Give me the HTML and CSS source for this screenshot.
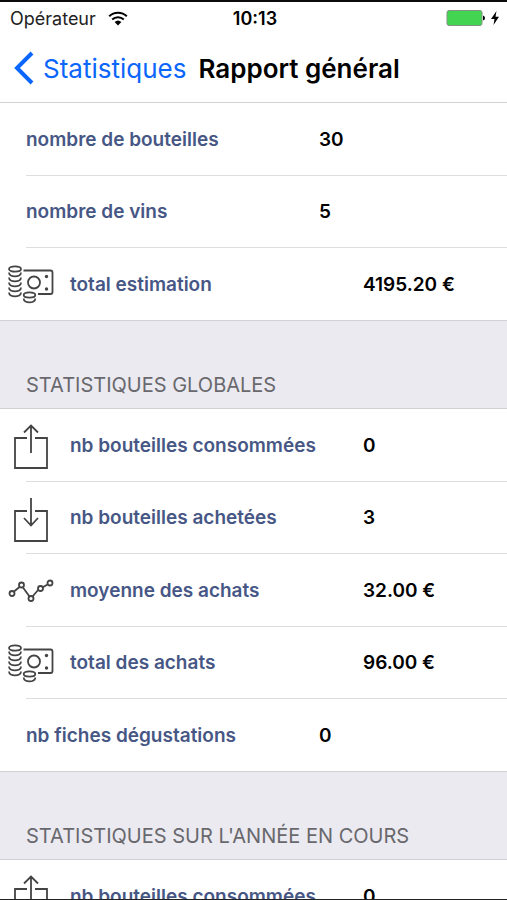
FILE: index.html
```html
<!DOCTYPE html>
<html lang="fr">
<head>
<meta charset="utf-8">
<meta name="viewport" content="width=device-width, initial-scale=1">
<title>Rapport général</title>
<link rel="stylesheet" href="styles.css">
</head>
<body>
<svg class="sprite" aria-hidden="true">
  <symbol id="money" viewBox="0 0 48 40">
    <ellipse cx="7" cy="5" rx="6" ry="2.6"/>
    <path d="M1 8.500c0 5.200 12 5.200 12 0M1 13.500c0 5.200 12 5.200 12 0M1 18.500c0 5.200 12 5.200 12 0M1 23.500c0 5.200 12 5.200 12 0M1 28.500c0 5.200 12 5.200 12 0"/>
    <path d="M15.500 6.500H42.500q2 0 2 2V28q0 2-2 2H30"/>
    <circle cx="26" cy="18.500" r="6"/>
    <ellipse cx="21.500" cy="31" rx="5.800" ry="2.600"/>
    <path d="M15.700 34.500c0 5.200 11.600 5.200 11.600 0"/>
    <circle class="dot" cx="38.500" cy="12.500" r="1.700"/>
    <circle class="dot" cx="38.500" cy="25" r="1.700"/>
  </symbol>
  <symbol id="out" viewBox="0 0 48 48">
    <path d="M19 17H7v30h32V17H27M23 32V5M16 11.500 23 4.500 30 11.500"/>
  </symbol>
  <symbol id="in" viewBox="0 0 48 48">
    <path d="M19 17H7v30h32V17H27M23 4v27M16 24 23 31.500 30 24"/>
  </symbol>
  <symbol id="chart" viewBox="0 0 48 24">
    <path d="M6 13.500 11.500 9M15 9.500 21.500 18.500M24.500 18.500 30.500 11.500M34.500 9.500 39.500 6.500"/>
    <circle cx="4" cy="15.500" r="2.500"/><circle cx="13.500" cy="7" r="2.500"/><circle cx="23" cy="20.500" r="2.500"/><circle cx="32.500" cy="10.500" r="2.500"/><circle cx="42" cy="5" r="2.500"/>
  </symbol>
</svg>
<div class="screen">
  <div class="status">
    <span class="carrier">Opérateur
      <svg class="wifi" viewBox="0 0 20 15" aria-hidden="true"><path d="M1.200 5.300a12.600 12.600 0 0 1 17.600 0M4.200 8.500a8.300 8.300 0 0 1 11.600 0"/><path class="solid" d="M6.600 11a5 5 0 0 1 6.800 0L10 14.500z"/></svg>
    </span>
    <time>10:13</time>
    <span class="power">
      <svg class="battery" viewBox="0 0 40 18" aria-hidden="true"><rect x="1" y="1.500" width="35" height="15" rx="2"/><path d="M37 6.500q2 .5 2 2.500t-2 2.500z"/></svg>
      <svg class="bolt" viewBox="0 0 10 16" aria-hidden="true"><path d="M6.500 1 1 9h3.500L3.500 15 9 6.800H5.500z"/></svg>
    </span>
  </div>
  <header class="nav">
    <a class="back" href="#"><svg viewBox="0 0 22 34" aria-hidden="true"><path d="M20 2 5 17 20 32"/></svg>Statistiques</a>
    <h1>Rapport général</h1>
  </header>
  <main>
    <dl class="group">
      <div class="row"><dt>nombre de bouteilles</dt><dd>30</dd></div>
      <div class="row"><dt>nombre de vins</dt><dd>5</dd></div>
      <div class="row with-icon"><dt><svg class="icon money"><use href="#money"/></svg>total estimation</dt><dd>4195.20 €</dd></div>
    </dl>
    <h2>Statistiques globales</h2>
    <dl class="group">
      <div class="row with-icon"><dt><svg class="icon"><use href="#out"/></svg>nb bouteilles consommées</dt><dd>0</dd></div>
      <div class="row with-icon"><dt><svg class="icon"><use href="#in"/></svg>nb bouteilles achetées</dt><dd>3</dd></div>
      <div class="row with-icon"><dt><svg class="icon chart"><use href="#chart"/></svg>moyenne des achats</dt><dd>32.00 €</dd></div>
      <div class="row with-icon"><dt><svg class="icon money"><use href="#money"/></svg>total des achats</dt><dd>96.00 €</dd></div>
      <div class="row"><dt>nb fiches dégustations</dt><dd>0</dd></div>
    </dl>
    <h2>Statistiques sur l'année en cours</h2>
    <dl class="group">
      <div class="row with-icon"><dt><svg class="icon"><use href="#out"/></svg>nb bouteilles consommées</dt><dd>0</dd></div>
    </dl>
  </main>
</div>
</body>
</html>
```
FILE: styles.css
```css
* { box-sizing: border-box; }

body {
  margin: 0;
  background: #fff;
  color: #000;
  font-family: Inter, "Liberation Sans", sans-serif;
}

.sprite { display: none; }

.screen {
  height: 100vh;
  overflow: hidden;
  border-top: 2px solid #0c0a0d;
  border-bottom: 1px solid #222;
}

.status {
  display: grid;
  grid-template-columns: 1fr auto 1fr;
  align-items: center;
  height: 32px;
  padding: 0 7px 0 10px;
  font-size: 18px;
}

.carrier {
  display: flex;
  align-items: center;
  gap: 12px;
  color: #222;
}

.wifi {
  width: 20px;
  height: 15px;
  fill: none;
  stroke: #000;
  stroke-width: 2;
}

.wifi .solid { fill: #000; stroke: none; }

.status time { font-weight: 600; }

.power {
  display: flex;
  justify-content: flex-end;
  align-items: center;
  gap: 4px;
}

.battery { width: 40px; height: 18px; }
.battery rect { fill: #43d551; stroke: #829384; }
.bolt { width: 10px; height: 16px; }

.nav {
  display: flex;
  align-items: center;
  gap: 12px;
  height: 68px;
  padding: 0 12px;
}

.back {
  display: flex;
  align-items: center;
  gap: 9px;
  color: #0b66fb;
  font-size: 26px;
  text-decoration: none;
}

.back svg {
  width: 22px;
  height: 34px;
  fill: none;
  stroke: currentColor;
  stroke-width: 4;
}

h1 {
  margin: 0;
  font-size: 26px;
  font-weight: 600;
  white-space: nowrap;
}

.group { margin: 0; }

.row {
  display: flex;
  align-items: center;
  height: 73px;
  margin-left: 26px;
  border-top: 1px solid #dedee0;
  font-size: 19px;
  font-weight: 600;
}

.row:nth-child(even) { height: 72px; }

.row:first-child {
  margin-left: 0;
  padding-left: 26px;
  border-color: #d2d2d6;
}

.with-icon { padding-left: 44px; }
.with-icon:first-child { padding-left: 70px; }

dt {
  display: flex;
  align-items: center;
  flex: 0 0 293px;
  color: #475785;
}

dd { margin: 0; }

.icon {
  flex: none;
  width: 48px;
  height: 48px;
  margin-left: -62px;
  margin-right: 14px;
  fill: none;
  stroke: #444;
  stroke-width: 1.8;
}

.money { height: 40px; }
.chart { height: 24px; }
.dot { fill: #444; stroke: none; }

h2 {
  display: flex;
  align-items: flex-end;
  height: 88px;
  margin: 0;
  padding: 0 26px 11px;
  border-top: 1px solid #d2d2d6;
  background: #ebeaf0;
  color: #68686d;
  font-size: 20px;
  font-weight: 400;
  text-transform: uppercase;
}
```
